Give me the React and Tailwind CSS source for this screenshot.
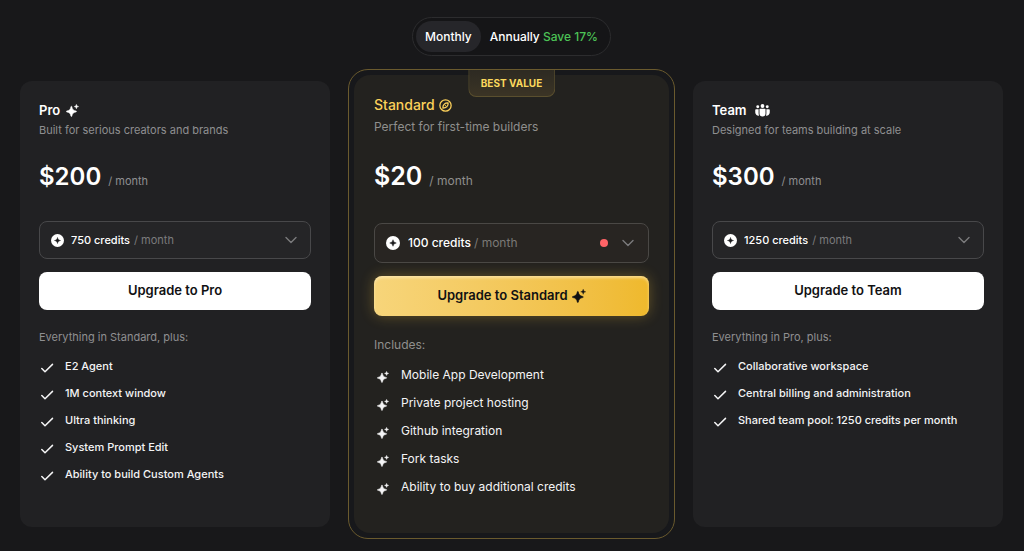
import { useState } from "react";

function Sparkle({ className }) {
  return (
    <svg viewBox="0 0 20 20" fill="currentColor" aria-hidden="true" className={className}>
      <path d="M8.3 3.4C8.7 3.4 8.9 3.7 9 4.1C9.8 8.2 11.2 9.8 15.4 10.7C16.4 10.9 16.4 12 15.4 12.2C11.2 13.1 9.8 14.7 9 18.8C8.9 19.5 7.7 19.5 7.6 18.8C6.8 14.7 5.4 13.1 1.2 12.2C0.2 12 0.2 10.9 1.2 10.7C5.4 9.8 6.8 8.2 7.6 4.1C7.7 3.7 7.9 3.4 8.3 3.4Z" stroke="currentColor" strokeWidth="0.8" strokeLinejoin="round" />
      <path d="M16 0.4C16.5 2.7 17.2 3.4 19.6 4C17.2 4.6 16.5 5.3 16 7.6C15.5 5.3 14.8 4.6 12.4 4C14.8 3.4 15.5 2.7 16 0.4Z" stroke="currentColor" strokeWidth="0.6" strokeLinejoin="round" />
    </svg>
  );
}

function Compass({ className }) {
  return (
    <svg viewBox="0 0 24 24" fill="none" stroke="currentColor" strokeWidth="2.4" strokeLinejoin="round" aria-hidden="true" className={className}>
      <circle cx="12" cy="12" r="10.4" />
      <path d="M16.8 7.2C17.2 10.5 16.2 13 14.4 14.4C12.6 16 10 16.9 7.2 16.8C6.9 13.6 7.8 11.2 9.6 9.6C11.3 8 13.8 7 16.8 7.2Z" />
      <circle cx="12" cy="12" r="1" fill="currentColor" stroke="none" />
    </svg>
  );
}

function People({ className }) {
  return (
    <svg viewBox="0 0 30 26" fill="currentColor" aria-hidden="true" className={className}>
      <circle cx="15" cy="4" r="3.8" />
      <circle cx="5.5" cy="5.6" r="2.9" />
      <circle cx="24.5" cy="5.6" r="2.9" />
      <path d="M10.5 9.5H19.5Q21 9.5 21 11V18.5A6 6.5 0 0 1 9 18.5V11Q9 9.5 10.5 9.5Z" />
      <path d="M2 10.5H7.2V18.5Q7.2 21 8.2 23.2A6.5 6.5 0 0 1 0.5 17V12Q0.5 10.5 2 10.5Z" />
      <path d="M28 10.5H22.8V18.5Q22.8 21 21.8 23.2A6.5 6.5 0 0 0 29.5 17V12Q29.5 10.5 28 10.5Z" />
    </svg>
  );
}

function CreditCoin({ className }) {
  return (
    <svg viewBox="0 0 28 28" aria-hidden="true" className={className}>
      <circle cx="14" cy="14" r="14" fill="#fff" />
      <path d="M14 7.5C15 11.7 16.3 13 20.5 14C16.3 15 15 16.3 14 20.5C13 16.3 11.7 15 7.5 14C11.7 13 13 11.7 14 7.5Z" fill="#1c1c1e" stroke="#1c1c1e" strokeWidth="1" strokeLinejoin="round" />
    </svg>
  );
}

function Chevron() {
  return (
    <svg viewBox="0 0 12 8" fill="none" stroke="currentColor" strokeWidth="1.4" strokeLinecap="round" strokeLinejoin="round" aria-hidden="true" className="h-2 w-3 text-[#7b7b7d]">
      <path d="M1 1.5L6 6.5L11 1.5" />
    </svg>
  );
}

function Check() {
  return (
    <svg viewBox="0 0 14 10" fill="none" stroke="currentColor" strokeWidth="1.5" strokeLinecap="round" strokeLinejoin="round" aria-hidden="true" className="mt-0.5 h-[10px] w-[14px] shrink-0">
      <path d="M1.8 5.5L5 8.8L12.5 1.4" />
    </svg>
  );
}

function SidePlan({ name, icon, tagline, price, credits, lead, features }) {
  return (
    <section className="my-3 rounded-xl bg-[#212123] px-[19px] pt-[19px] pb-8">
      <h2 className="flex items-center gap-1.5 text-[13px] leading-5 font-semibold">
        {name}
        {icon}
      </h2>
      <p className="mt-0.5 text-[11px] leading-4 text-[#8f8f91]">{tagline}</p>
      <p className="mt-[21px] flex h-9 items-baseline gap-[7px] leading-9">
        <span className="text-[24px] font-semibold">{price}</span>
        <span className="text-[11px] text-[#8f8f91]">/ month</span>
      </p>
      <div className="mt-[26px] flex h-[38px] items-center rounded-lg border border-[#48484a] bg-[#252527] px-[11px] text-[11px]">
        <CreditCoin className="mr-[7px] size-[13px] shrink-0" />
        <select aria-label={`${name} credits`} className="h-6 appearance-none bg-transparent leading-6 font-medium outline-none [field-sizing:content]">
          <option>{credits} credits</option>
        </select>
        <span className="ml-1 flex-1 text-[#7b7b7d]">/ month</span>
        <span className="mr-0.5"><Chevron /></span>
      </div>
      <button type="button" className="mt-[13px] h-[38px] w-full rounded-lg bg-white text-[13px] font-semibold text-[#111113]">
        Upgrade to {name}
      </button>
      <p className="mt-[19px] text-[11px] leading-4 text-[#8f8f91]">{lead}</p>
      <ul className="mt-2 text-[11px] leading-[27px] font-medium text-[#f4f4f5]">
        {features.map((f) => (
          <li key={f} className="flex items-center gap-[11px] pl-px">
            <Check />
            {f}
          </li>
        ))}
      </ul>
    </section>
  );
}

export default function App() {
  const [period, setPeriod] = useState("monthly");
  return (
    <main className="min-h-screen bg-[#18181a] pt-[17px] pr-[21px] pb-3 pl-5 font-['Inter',sans-serif] text-white">
      <div className="mx-auto flex h-[39px] w-fit items-center rounded-full border border-[#2c2c2e] bg-[#151517] px-[3px] text-xs font-medium">
        <button
          type="button"
          aria-pressed={period === "monthly"}
          onClick={() => setPeriod("monthly")}
          className="h-[31px] rounded-full px-[9px] aria-pressed:bg-[#26262a]"
        >
          Monthly
        </button>
        <button
          type="button"
          aria-pressed={period === "annually"}
          onClick={() => setPeriod("annually")}
          className="h-[31px] rounded-full px-[9px] aria-pressed:bg-[#26262a]"
        >
          Annually <span className="text-[#4cc256]">Save 17%</span>
        </button>
      </div>

      <div className="mt-[13px] grid grid-cols-[310fr_327fr_310fr] gap-[18px]">
        <SidePlan
          name="Pro"
          icon={<Sparkle className="size-[13px]" />}
          tagline="Built for serious creators and brands"
          price="$200"
          credits="750"
          lead="Everything in Standard, plus:"
          features={["E2 Agent", "1M context window", "Ultra thinking", "System Prompt Edit", "Ability to build Custom Agents"]}
        />

        <section className="relative rounded-[20px] border border-[#6a5a2e] bg-[#17181b] p-[5px]">
          <span className="absolute top-0 left-1/2 flex h-[27px] -translate-x-1/2 items-center rounded-b-lg border border-t-0 border-[#5a4f2e] bg-linear-to-b from-[#2d2a22] to-[#3b3425] px-3 text-[10px] font-bold whitespace-nowrap text-[#fbd85d]">
            BEST VALUE
          </span>
          <div className="rounded-2xl bg-[#23221f] px-5 pt-5 pb-8">
            <h2 className="flex items-center gap-1 text-sm leading-5 font-medium text-[#fbd05a]">
              Standard
              <Compass className="size-[13px]" />
            </h2>
            <p className="mt-1 text-xs leading-4 text-[#8f8f8d]">Perfect for first-time builders</p>
            <p className="mt-[23px] flex h-9 items-baseline gap-[7px] leading-9">
              <span className="text-[25px] font-semibold">$20</span>
              <span className="text-xs text-[#8f8f8d]">/ month</span>
            </p>
            <div className="mt-[29px] flex h-10 items-center rounded-lg border border-[#4a4845] bg-[#282522] px-[11px] text-xs">
              <CreditCoin className="mr-2 size-[14px] shrink-0" />
              <select aria-label="Standard credits" className="h-6 appearance-none bg-transparent leading-6 font-medium outline-none [field-sizing:content]">
                <option>100 credits</option>
              </select>
              <span className="ml-[3px] flex-1 text-[#7b7976]">/ month</span>
              <span className="mr-[14px] size-2 rounded-full bg-[#ff6467]" />
              <span className="mr-[3px]"><Chevron /></span>
            </div>
            <button
              type="button"
              className="mt-[13px] flex h-10 w-full items-center justify-center gap-1 rounded-lg bg-linear-to-r from-[#f7d57a] to-[#efb92c] text-[13px] font-semibold text-[#111113] shadow-[0_0_14px_rgba(240,190,60,0.32),inset_0_2px_3px_rgba(255,240,200,0.6)]"
            >
              Upgrade to Standard
              <Sparkle className="size-[14px]" />
            </button>
            <p className="mt-[21px] text-xs leading-4 text-[#8f8f8d]">Includes:</p>
            <ul className="mt-2 text-xs leading-7 text-[#f4f4f5]">
              {["Mobile App Development", "Private project hosting", "Github integration", "Fork tasks", "Ability to buy additional credits"].map((f) => (
                <li key={f} className="flex items-center gap-3 pl-[3px]">
                  <Sparkle className="mt-1 size-3 shrink-0" />
                  {f}
                </li>
              ))}
            </ul>
          </div>
        </section>

        <SidePlan
          name="Team"
          icon={<People className="ml-0.5 h-[13px] w-[15px]" />}
          tagline="Designed for teams building at scale"
          price="$300"
          credits="1250"
          lead="Everything in Pro, plus:"
          features={["Collaborative workspace", "Central billing and administration", "Shared team pool: 1250 credits per month"]}
        />
      </div>
    </main>
  );
}
